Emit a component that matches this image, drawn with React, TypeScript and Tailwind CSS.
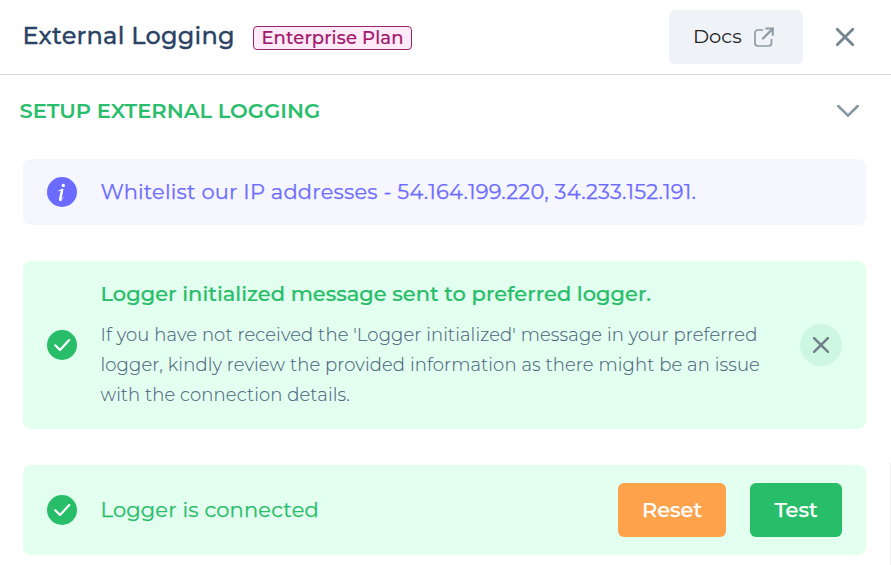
import type { ReactNode } from 'react';

function CheckBadge() {
  return (
    <svg className="size-[30px] shrink-0" viewBox="0 0 30 30" fill="none">
      <circle cx="15" cy="15" r="15" fill="#27bd69" />
      <path d="M8.2 15.3 13 20 22.2 10.1" stroke="#fff" strokeWidth="2.2" strokeLinecap="round" strokeLinejoin="round" />
    </svg>
  );
}

function InfoBadge() {
  return (
    <svg className="size-[30px] shrink-0" viewBox="0 0 30 30" fill="none">
      <circle cx="15" cy="15" r="15" fill="#6b6bff" />
      <circle cx="16.3" cy="8.4" r="1.7" fill="#fff" />
      <path d="M11.9 13.7 15.6 12.5 13.5 21.6C13.2 23 14.2 22.7 16 20.8" stroke="#fff" strokeWidth="1" strokeLinecap="round" strokeLinejoin="round" />
      <path d="M15.2 12.8 13.3 21.4C13.1 22.3 13.1 22.8 13.6 22.9" stroke="#fff" strokeWidth="2.4" strokeLinecap="round" />
    </svg>
  );
}

function Cross({ className }: { className: string }) {
  return (
    <svg className={className} viewBox="0 0 18 18" fill="none" stroke="currentColor" strokeLinecap="round">
      <path d="M1.2 1.2 16.8 16.8M16.8 1.2 1.2 16.8" />
    </svg>
  );
}

function Panel({ className, children }: { className: string; children: ReactNode }) {
  return <section className={`flex items-center rounded-lg px-6 ${className}`}>{children}</section>;
}

export default function App() {
  return (
    <main className="relative h-[565px] w-[891px] overflow-hidden bg-white font-['Montserrat','Inter',sans-serif] whitespace-nowrap">
      <header className="flex h-[75px] items-start border-b border-[#d4d6d8] pl-[22.5px]">
        <h1 className="mt-[18px] w-[230.5px] text-2xl leading-9 font-medium tracking-[0.22px] text-[#2a4365] [-webkit-text-stroke:0.3px]">External Logging</h1>
        <span className="mt-[26px] flex h-6 w-[159px] items-center justify-center rounded-[4px] border border-[#97266d] bg-[#ffebf8] text-lg font-medium tracking-[0.13px] text-[#a3196d] [-webkit-text-stroke:0.15px]">Enterprise Plan</span>
        <button className="mt-[10px] ml-[257px] flex h-[54px] w-[134px] items-center rounded-md bg-[#eff3f8] pl-6 text-[19.5px] text-[#222]">
          <span className="w-[61px] text-left">Docs</span>
          <svg className="size-5 text-[#8d9ba3]" viewBox="0 0 20 20" fill="none" stroke="currentColor">
            <path d="M8.5 3H4Q1 3 1 6V16Q1 19 4 19H14.5Q17.5 19 17.5 16V12.5" strokeWidth="1.7" strokeLinecap="round" />
            <path d="M9 11.5 18.5 2" strokeWidth="2.3" strokeLinecap="round" />
            <path d="M11.5 1.4H18.8V8.8" strokeWidth="2" />
          </svg>
        </button>
        <button className="mt-7 ml-[33px]"><Cross className="size-[18px] stroke-[2.8] text-[#748790]" /></button>
      </header>
      <div className="flex h-[84px] items-start justify-between pr-8 pl-[19.5px]">
        <h2 className="mt-5 text-[21px] leading-8 font-semibold text-[#2abd6c]">SETUP EXTERNAL LOGGING</h2>
        <svg className="mt-[29px] h-[14px] w-[22px] text-[#84969f]" viewBox="0 0 22 14" fill="none" stroke="currentColor">
          <path d="M1.2 2 11 11.6 20.8 2" strokeWidth="2.5" strokeLinecap="round" />
        </svg>
      </div>
      <div className="ml-[23px] flex w-[843px] flex-col gap-9">
        <Panel className="h-[66px] bg-[#f6f6ff]">
          <InfoBadge />
          <p className="ml-[23.5px] text-[21px] tracking-[0.19px] text-[#6b6bff] [-webkit-text-stroke:0.25px]">Whitelist our IP addresses - 54.164.199.220, 34.233.152.191.</p>
        </Panel>
        <Panel className="h-[168px] bg-[#e2ffef]">
          <CheckBadge />
          <div className="-mt-[3px] ml-[23.5px] flex w-[699.5px] flex-col">
            <h3 className="mb-[10px] text-[21px] leading-8 font-medium text-[#27bd69] [-webkit-text-stroke:0.2px]">Logger initialized message sent to preferred logger.</h3>
            <p className="text-lg leading-[30px] font-light tracking-[0.12px] text-[#4a5f7c] [-webkit-text-stroke:0.1px]">
              <span className="block">If you have not received the 'Logger initialized' message in your preferred</span>
              <span className="block">logger, kindly review the provided information as there might be an issue</span>
              <span className="block">with the connection details.</span>
            </p>
          </div>
          <button className="flex size-[42px] shrink-0 items-center justify-center rounded-full bg-[#cdf7e1]">
            <Cross className="size-4 stroke-[2.9] text-[#73818c]" />
          </button>
        </Panel>
        <Panel className="h-[90px] bg-[#e2ffef]">
          <CheckBadge />
          <p className="ml-[23.5px] text-[21px] tracking-[0.18px] text-[#27bd69] [-webkit-text-stroke:0.25px]">Logger is connected</p>
          <button className="ml-auto h-[54px] w-[108px] rounded-md bg-[#ffa24c] text-[21px] font-medium text-white [-webkit-text-stroke:0.25px]">Reset</button>
          <button className="ml-6 h-[54px] w-[92px] rounded-md bg-[#27bd69] text-[21px] font-medium text-white [-webkit-text-stroke:0.25px]">Test</button>
        </Panel>
      </div>
      <div className="absolute right-0 bottom-0 h-[102px] w-px bg-[#eeeeee]" />
    </main>
  );
}
